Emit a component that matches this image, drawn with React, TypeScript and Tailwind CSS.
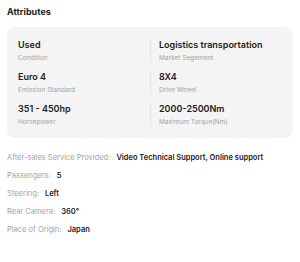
import React from "react";

type Spec = { value: string; label: string };

const specs: Spec[] = [
  { value: "Used", label: "Condition" },
  { value: "Logistics transportation", label: "Market Segement" },
  { value: "Euro 4", label: "Emission Standard" },
  { value: "8X4", label: "Drive Wheel" },
  { value: "351 - 450hp", label: "Horsepower" },
  { value: "2000-2500Nm", label: "Maximum Torque(Nm)" },
];

const details: [string, string][] = [
  ["After-sales Service Provided:", "Video Technical Support, Online support"],
  ["Passengers:", "5"],
  ["Steering:", "Left"],
  ["Rear Camera:", "360°"],
  ["Place of Origin:", "Japan"],
];

const SpecCell: React.FC<{ spec: Spec; divided: boolean }> = ({ spec, divided }) => (
  <div className={`flex h-[23px] flex-col ${divided ? "border-l border-[#e4e4e4] pl-2" : ""}`}>
    <span className="text-[9px] font-semibold leading-[11px] text-[#1c1c1c]">{spec.value}</span>
    <span className="mt-[5px] text-[6.5px] leading-[7px] text-[#a3a3a3]">{spec.label}</span>
  </div>
);

export default function App() {
  return (
    <div className="h-[262px] w-[300px] bg-white px-[7px] pt-[6px] font-['Inter',sans-serif]">
      <h2 className="text-[9px] font-bold leading-[12px] text-[#1c1c1c]">Attributes</h2>

      <div className="mt-[9px] grid grid-cols-2 gap-y-[9px] rounded-lg bg-[#f4f4f4] px-[11px] pt-[12px] pb-[12px]">
        {specs.map((spec, i) => (
          <SpecCell key={spec.label} spec={spec} divided={i % 2 === 1} />
        ))}
      </div>

      <div className="mt-[15px] flex flex-col gap-[8px]">
        {details.map(([k, v]) => (
          <div key={k} className="flex items-center gap-[6px] text-[7.5px] leading-[10px]">
            <span className="text-[#a3a3a3]">{k}</span>
            <span className="font-semibold text-[#1c1c1c]">{v}</span>
          </div>
        ))}
      </div>
    </div>
  );
}
